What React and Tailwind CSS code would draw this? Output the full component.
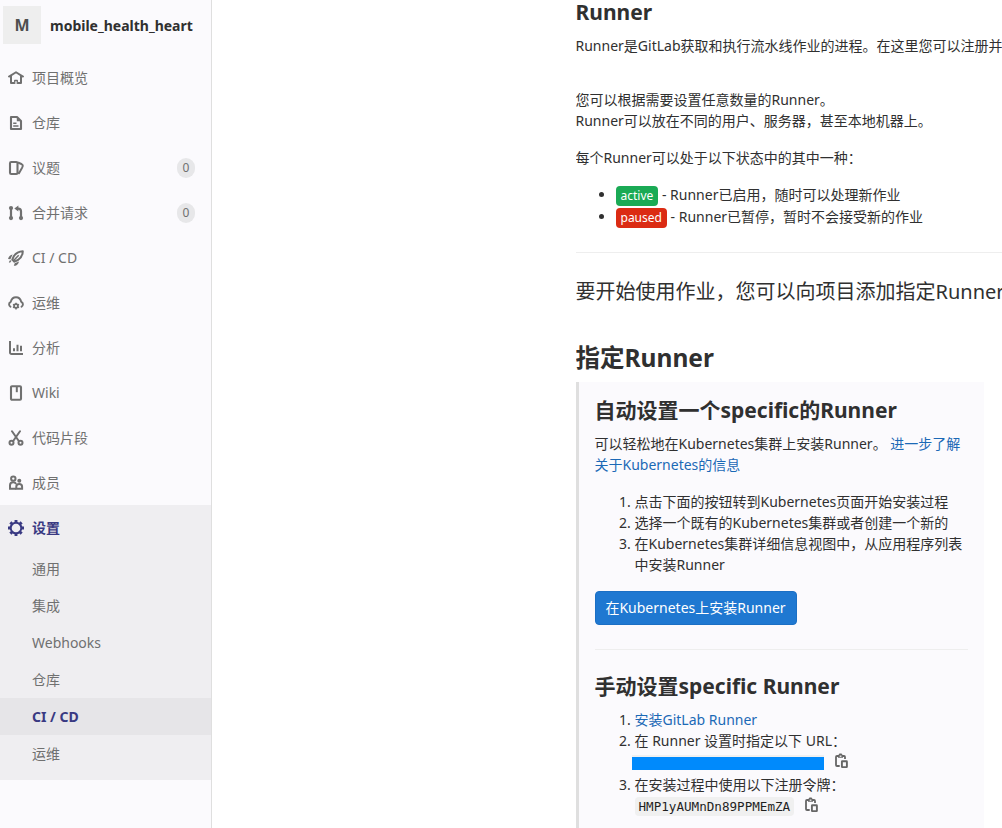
import React from 'react';

function Icon({ children, className = '' }) {
  return (
    <svg
      viewBox="0 0 16 16"
      width="16"
      height="16"
      fill="none"
      stroke="currentColor"
      strokeWidth="2"
      className={`block shrink-0 ${className}`}
    >
      {children}
    </svg>
  );
}

const HomeIcon = () => (
  <Icon>
    <path d="M1 6.600 8 2.200l7 4.400" strokeLinecap="round" strokeLinejoin="round" strokeWidth="1.900" />
    <path d="M3 6V13H6M13 6V13H10" strokeLinejoin="round" />
    <path d="M6.700 13.900V10.500h2.600v3.400" strokeWidth="1.300" strokeLinejoin="round" />
  </Icon>
);

const DocIcon = () => (
  <Icon>
    <path d="M3 2h6l4 4v8H3z" strokeLinejoin="round" strokeWidth="2.100" />
    <path d="M8.800 2.500V6.200H12.500z" fill="currentColor" stroke="none" />
    <path d="M5.200 8.300h3.300M5.200 11h5.300" strokeWidth="1.600" />
  </Icon>
);

const IssuesIcon = () => (
  <Icon>
    <rect x="2" y="2" width="7.500" height="12" rx="1.200" strokeWidth="2.100" />
    <path d="M10 2.500c2 .8 4.100 1.800 4.600 2.600.5.800 0 1.600-.5 2.600L11 13.300l-1-.8" strokeWidth="1.900" strokeLinejoin="round" />
  </Icon>
);

const MergeIcon = () => (
  <Icon>
    <path d="M3 3.500v9" strokeWidth="2.200" />
    <circle cx="3" cy="3" r="2.100" fill="currentColor" stroke="none" />
    <circle cx="3" cy="13.100" r="2.100" fill="currentColor" stroke="none" />
    <path d="M9 3.600h1.300A2.700 2.700 0 0 1 13 6.300V13" strokeWidth="2.200" />
    <path d="M10.400.600v6L6.300 3.600z" fill="currentColor" stroke="none" />
    <circle cx="13" cy="13.100" r="2.100" fill="currentColor" stroke="none" />
  </Icon>
);

const RocketIcon = () => (
  <Icon>
    <path d="M14.800 1.200c-4 .1-6.600 1.400-9 5L4.300 9.600l2.100 2.100 3.600-1.700c3.300-2.300 4.700-4.900 4.800-8.800z" strokeWidth="2" strokeLinejoin="round" />
    <path d="M5.200 11 10.700 5.300" strokeWidth="1.500" />
    <path d="M4.600 4.600C2.500 5 1 6.300 0 8.900l2.400.3zM.8 12.200l1.200-2 1.600.5-1.600 2z" fill="currentColor" stroke="none" />
    <path d="M6.700 13.200 5.800 15.800c2.200 0 4.500-1.100 5.300-4.400z" fill="currentColor" stroke="none" />
  </Icon>
);

const CloudGearIcon = () => (
  <Icon>
    <path
      d="M2.500 11.700C.6 10.500.5 8 2.700 6.900 3.500 3.800 5.500 2.200 8 2.200s4.500 1.600 5.300 4.700c2.200 1.100 2.100 3.600.2 4.800"
      strokeLinecap="round"
      strokeLinejoin="round"
      strokeWidth="1.900"
    />
    <circle cx="8" cy="11" r="1.900" strokeWidth="1.700" />
    <path d="M8 7.700V9M8 13v1.500M5 9.300l1.300.7M9.700 12l1.300.7M5 12.700l1.300-.7M9.700 10l1.300-.7" strokeWidth="1.500" />
  </Icon>
);

const ChartIcon = () => (
  <Icon>
    <path d="M2 1v11.500A1.500 1.500 0 0 0 3.500 14H15" />
    <path d="M6 8.300v3M9.500 4.800v6.500M13 5.800v5.500" strokeWidth="2" />
  </Icon>
);

const WikiIcon = () => (
  <Icon>
    <rect x="3" y="1.200" width="10" height="13.500" rx="1" strokeWidth="2.100" />
    <path d="M8.800 2v5.200" strokeWidth="2" />
  </Icon>
);

const ScissorsIcon = () => (
  <Icon>
    <path d="M4 1.200 10.800 11M12 1.200 5.200 11" strokeLinecap="round" strokeWidth="2" />
    <circle cx="3.500" cy="12.800" r="2" strokeWidth="2" />
    <circle cx="12.500" cy="12.800" r="2" strokeWidth="2" />
  </Icon>
);

const UsersIcon = () => (
  <Icon>
    <circle cx="5.300" cy="3.600" r="2.200" strokeWidth="2" />
    <path d="M8.200 13.800H2v-3.500C2 8.300 3.300 7.200 5.200 7.200c1.300 0 2.300.6 2.900 1.800" strokeWidth="2" />
    <circle cx="11.300" cy="5.800" r="2" fill="currentColor" stroke="none" />
    <path d="M8.300 13.800v-2c0-1.700 1.200-2.700 2.900-2.700s2.900 1 2.900 2.700v2z" strokeWidth="2" />
  </Icon>
);

const GearIcon = () => (
  <Icon>
    <circle cx="8" cy="8" r="5.300" strokeWidth="2" />
    <path
      d="M8 0v3M8 13v3M0 8h3M13 8h3M2.350 2.350l1.700 1.700M11.950 11.950l1.700 1.700M2.350 13.650l1.700-1.700M11.950 4.050l1.700-1.700"
      strokeWidth="2.900"
    />
  </Icon>
);

const CopyIcon = () => (
  <Icon className="text-[#666]">
    <path
      d="M6.700 13H4a1 1 0 0 1-1-1V4a1 1 0 0 1 1-1h7a1 1 0 0 1 1 1v2"
      strokeWidth="1.800"
    />
    <path d="M5 4.800V2.500L6.500.400h2L10 2.500V4.800z" fill="currentColor" stroke="none" />
    <path d="M6.700 3.200h1.700" stroke="#fbfafd" strokeWidth="1.200" />
    <rect x="8.900" y="8.300" width="5" height="5.800" rx=".4" strokeWidth="1.900" />
  </Icon>
);

const navItems = [
  { label: '项目概览', icon: HomeIcon },
  { label: '仓库', icon: DocIcon },
  { label: '议题', icon: IssuesIcon, count: 0 },
  { label: '合并请求', icon: MergeIcon, count: 0 },
  { label: 'CI / CD', icon: RocketIcon },
  { label: '运维', icon: CloudGearIcon },
  { label: '分析', icon: ChartIcon },
  { label: 'Wiki', icon: WikiIcon },
  { label: '代码片段', icon: ScissorsIcon },
  { label: '成员', icon: UsersIcon },
];

const subItems = ['通用', '集成', 'Webhooks', '仓库', 'CI / CD', '运维'];

function Sidebar() {
  return (
    <aside className="flex h-full w-[212px] shrink-0 flex-col border-r border-[#dfdfdf] bg-[#fbfafd] text-[#707070]">
      <div className="flex h-[55px] items-start pt-1.5 pl-[3px]">
        <div className="flex h-[38px] w-[38px] items-center justify-center bg-[#eee] text-base font-bold text-[#4f4f4f]">
          M
        </div>
        <span className="ml-[9px] leading-[40px] font-bold text-[#303030]">mobile_health_heart</span>
      </div>
      <nav>
        {navItems.map(({ label, icon: Glyph, count }) => (
          <a key={label} className="flex h-[45px] items-center pr-4 pl-2">
            <Glyph />
            <span className="ml-2 flex-1">{label}</span>
            {count !== undefined && (
              <span className="flex h-5 w-[18px] items-center justify-center rounded-full bg-[#e7e7e9] text-xs">
                {count}
              </span>
            )}
          </a>
        ))}
        <div className="bg-[#efeef1] pb-2">
          <a className="flex h-[45px] items-center pl-2 font-bold text-[#393982]">
            <GearIcon />
            <span className="ml-2">设置</span>
          </a>
          {subItems.map((label) => (
            <a
              key={label}
              className={`flex h-[37px] items-center pl-8 ${
                label === 'CI / CD' ? 'bg-[#e6e5e8] font-bold text-[#393982]' : ''
              }`}
            >
              {label}
            </a>
          ))}
        </div>
      </nav>
    </aside>
  );
}

function SpecificRunner() {
  return (
    <section className="h-[460px] w-[408px] border-l-[3px] border-[#dfdfdf] bg-[#fbfafd] pt-4 pr-4 pl-4">
      <h4 className="text-[21px] leading-[25px] font-bold">自动设置一个specific的Runner</h4>
      <p className="mt-[10px]">
        可以轻松地在Kubernetes集群上安装Runner。{' '}
        <a className="text-[#1b69b6]">
          进一步了解
          <br />
          关于Kubernetes的信息
        </a>
      </p>
      <ol className="mt-4 list-decimal pl-10">
        <li>点击下面的按钮转到Kubernetes页面开始安装过程</li>
        <li>选择一个既有的Kubernetes集群或者创建一个新的</li>
        <li>
          在Kubernetes集群详细信息视图中，从应用程序列表
          <br />
          中安装Runner
        </li>
      </ol>
      <button className="mt-4 flex h-[34px] w-[202px] items-center justify-center rounded-[4px] border border-[#1b6fc4] bg-[#1f78d1] leading-[20px] text-white">
        在Kubernetes上安装Runner
      </button>
      <hr className="mt-6 border-[#eee]" />
      <h4 className="mt-6 text-[21px] leading-[25px] font-bold">手动设置specific Runner</h4>
      <ol className="mt-[10px] list-decimal pl-10">
        <li>
          <a className="text-[#1b69b6]">安装GitLab Runner</a>
        </li>
        <li>
          在 Runner 设置时指定以下 URL：
          <div className="flex h-[23px] items-start">
            <span className="mt-[6px] -ml-[3px] h-[13px] w-[192.5px] bg-[#008afc] shadow-[0_-2px_0_#f0f0f0]" />
            <span className="ml-[9px] pt-0.5">
              <CopyIcon />
            </span>
          </div>
        </li>
        <li>
          在安装过程中使用以下注册令牌：
          <div className="flex h-[23px] items-start">
            <code className="mt-0.5 h-[19px] rounded-[4px] bg-[#f0f0f0] px-1 text-[12.6px] leading-[19px] text-[#1f1f1f]">
              HMP1yAUMnDn89PPMEmZA
            </code>
            <span className="ml-[9px] pt-0.5">
              <CopyIcon />
            </span>
          </div>
        </li>
      </ol>
    </section>
  );
}

function Badge({ children, className }) {
  return (
    <span className={`inline-block h-5 rounded-[4px] px-[5px] text-[12px] leading-[19px] text-white ${className}`}>
      {children}
    </span>
  );
}

export default function App() {
  return (
    <div className="flex h-[828px] w-[1002px] overflow-hidden bg-white font-['Noto_Sans','Noto_Sans_CJK_SC',sans-serif] text-sm leading-[21px] whitespace-nowrap text-[#303030] [&_code]:font-['DejaVu_Sans_Mono',monospace]">
      <Sidebar />
      <main className="ml-[363.5px] flex h-full min-w-0 flex-1 flex-col overflow-hidden">
        <h4 className="text-[21px] leading-[25px] font-bold">Runner</h4>
        <p className="mt-[10px]">Runner是GitLab获取和执行流水线作业的进程。在这里您可以注册并</p>
        <p className="mt-[33px]">
          您可以根据需要设置任意数量的Runner。
          <br />
          Runner可以放在不同的用户、服务器，甚至本地机器上。
        </p>
        <p className="mt-4">每个Runner可以处于以下状态中的其中一种：</p>
        <ul className="mt-4 list-disc pl-10">
          <li className="h-[22px]">
            <Badge className="bg-[#1aaa55]">active</Badge> - Runner已启用，随时可以处理新作业
          </li>
          <li className="h-[22px]">
            <Badge className="bg-[#db2b13]">paused</Badge> - Runner已暂停，暂时不会接受新的作业
          </li>
        </ul>
        <hr className="mt-6 border-[#eee]" />
        <p className="mt-6 text-[20px] leading-[30px]">要开始使用作业，您可以向项目添加指定Runner</p>
        <h3 className="mt-9 mb-[9px] text-[24.5px] leading-[30px] font-bold">指定Runner</h3>
        <SpecificRunner />
      </main>
    </div>
  );
}
